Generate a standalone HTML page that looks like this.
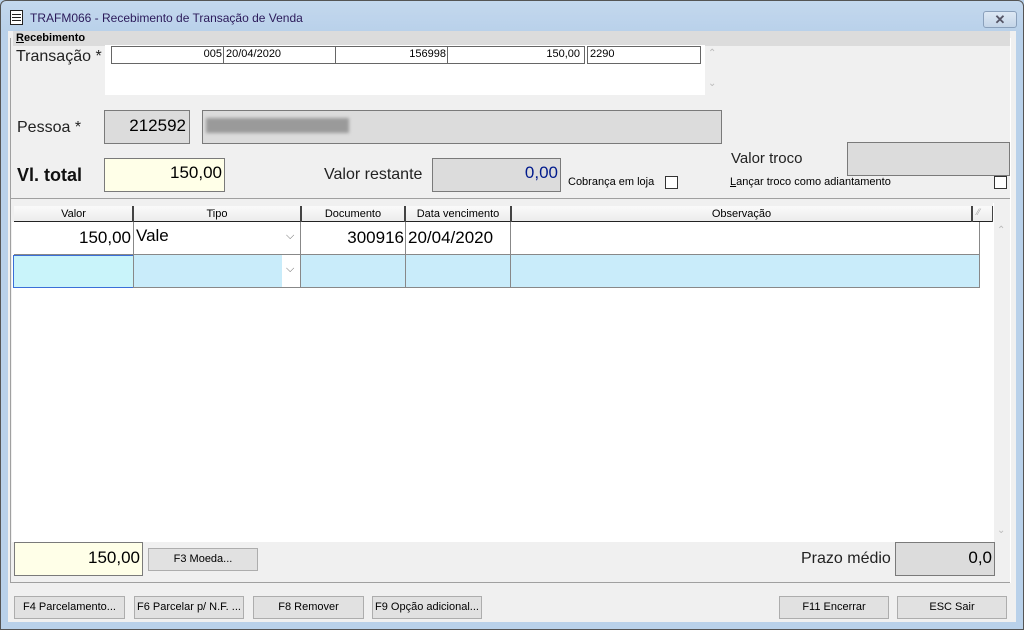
<!DOCTYPE html>
<html><head><meta charset="utf-8"><style>
*{box-sizing:border-box;margin:0;padding:0}
body{width:1024px;height:630px;overflow:hidden;background:#b9d1ea;font-family:"Liberation Sans",sans-serif;position:relative;font-size:11px;color:#000}
.a{position:absolute}
.box{position:absolute;border:1px solid #7a7a7a}
.btn{position:absolute;border:1px solid #adadad;background:#e1e1e1;font-size:11px;text-align:center;line-height:20px;height:23px}
.cb{position:absolute;width:13px;height:13px;border:1px solid #333;background:#fff}
.t{position:absolute;white-space:nowrap}
</style></head><body>
<div class="a" style="left:0;top:0;width:1024px;height:630px;border:1px solid #555;border-radius:6px 6px 0 0;background:linear-gradient(#c4d8ee,#b9d1ea 30px)"></div>
<div class="a" style="left:10px;top:10px;width:13px;height:15px;background:#fff;border:1px solid #222"></div>
<div class="a" style="left:12px;top:14px;width:9px;height:1px;background:#222;box-shadow:0 3px #222,0 6px #222"></div>
<div class="t" style="left:30px;top:11px;font-size:12px;color:#2b1a5a">TRAFM066 - Recebimento de Transação de Venda</div>
<div class="a" style="left:983px;top:11px;width:34px;height:17px;border:1px solid #8aa0bb;border-radius:3px;background:linear-gradient(#dde8f4,#c4d5e8);text-align:center;font-size:13px;font-weight:bold;line-height:15px;color:#556">✕</div>
<div class="a" style="left:8px;top:31px;width:1008px;height:591px;background:#f0f0f0"></div>
<div class="a" style="left:13px;top:31px;width:997px;height:15px;background:#dcdcdc"></div>
<div class="a" style="left:10px;top:38px;width:1px;height:545px;background:#a0a0a0"></div>
<div class="a" style="left:10px;top:582px;width:1000px;height:1px;background:#a0a0a0"></div>
<div class="a" style="left:1010px;top:38px;width:1px;height:545px;background:#fff"></div>
<div class="t" style="left:16px;top:32px;font-weight:bold;font-size:11px"><u>R</u>ecebimento</div>
<div class="t" style="left:16px;top:48px;font-size:16px;color:#222">Transação *</div>
<div class="a" style="left:105px;top:45px;width:600px;height:50px;background:#fff"></div>
<div class="box" style="left:111px;top:46px;width:474px;height:18px;border-color:#666"></div>
<div class="t" style="left:111px;top:48px;width:111px;text-align:right">005</div>
<div class="a" style="left:223px;top:46px;width:1px;height:18px;background:#666"></div>
<div class="t" style="left:226px;top:48px">20/04/2020</div>
<div class="a" style="left:335px;top:46px;width:1px;height:18px;background:#666"></div>
<div class="t" style="left:335px;top:48px;width:111px;text-align:right">156998</div>
<div class="a" style="left:447px;top:46px;width:1px;height:18px;background:#666"></div>
<div class="t" style="left:448px;top:48px;width:132px;text-align:right">150,00</div>
<div class="box" style="left:587px;top:46px;width:114px;height:18px;border-color:#666"></div>
<div class="t" style="left:590px;top:48px">2290</div>
<div class="t" style="left:708px;top:48px;color:#bbb;font-size:10px">⌃</div>
<div class="t" style="left:708px;top:78px;color:#bbb;font-size:10px">⌄</div>
<div class="t" style="left:17px;top:119px;font-size:16px;color:#222">Pessoa *</div>
<div class="box" style="left:104px;top:110px;width:86px;height:34px;background:#dcdcdc"></div>
<div class="t" style="left:104px;top:116px;width:82px;text-align:right;font-size:17px">212592</div>
<div class="box" style="left:202px;top:110px;width:520px;height:34px;background:#dcdcdc"></div>
<div class="a" style="left:206px;top:118px;width:143px;height:15px;background:#9a9a9a;filter:blur(1.5px)"></div>
<div class="t" style="left:17px;top:165px;font-size:18px;font-weight:bold;color:#111">Vl. total</div>
<div class="box" style="left:104px;top:158px;width:121px;height:34px;background:#ffffe8"></div>
<div class="t" style="left:104px;top:163px;width:118px;text-align:right;font-size:17px">150,00</div>
<div class="t" style="left:324px;top:166px;font-size:16px;color:#222">Valor restante</div>
<div class="box" style="left:432px;top:158px;width:129px;height:34px;background:#dcdcdc"></div>
<div class="t" style="left:432px;top:163px;width:126px;text-align:right;font-size:17px;color:#001a8c">0,00</div>
<div class="t" style="left:568px;top:176px;font-size:11px">Cobrança em loja</div>
<div class="cb" style="left:665px;top:176px"></div>
<div class="t" style="left:731px;top:150px;font-size:15px;color:#222">Valor troco</div>
<div class="box" style="left:847px;top:142px;width:163px;height:34px;background:#dcdcdc"></div>
<div class="t" style="left:730px;top:176px;font-size:11px"><u>L</u>ançar troco como adiantamento</div>
<div class="cb" style="left:994px;top:176px"></div>
<div class="a" style="left:10px;top:198px;width:1000px;height:1px;background:#a0a0a0"></div>
<div class="a" style="left:12px;top:203px;width:982px;height:339px;background:#fff"></div>
<div class="a" style="left:994px;top:222px;width:14px;height:320px;background:#f0f0f0"></div>
<div class="t" style="left:997px;top:225px;color:#bbb;font-size:10px">⌃</div>
<div class="t" style="left:997px;top:525px;color:#bbb;font-size:10px">⌄</div>
<div class="a" style="left:12px;top:203px;width:981px;height:19px;background:#f0f0f0"></div>
<div class="a" style="left:14px;top:206px;width:979px;height:16px;background:linear-gradient(#fafafa,#ececec);border-bottom:1px solid #222"></div>
<div class="t" style="left:14px;top:208px;width:119px;text-align:center">Valor</div>
<div class="t" style="left:133px;top:208px;width:168px;text-align:center">Tipo</div>
<div class="t" style="left:301px;top:208px;width:104px;text-align:center">Documento</div>
<div class="t" style="left:405px;top:208px;width:106px;text-align:center">Data vencimento</div>
<div class="t" style="left:511px;top:208px;width:461px;text-align:center">Observação</div>
<div class="a" style="left:132px;top:206px;width:2px;height:16px;background:#444"></div>
<div class="a" style="left:300px;top:206px;width:2px;height:16px;background:#444"></div>
<div class="a" style="left:404px;top:206px;width:2px;height:16px;background:#444"></div>
<div class="a" style="left:510px;top:206px;width:2px;height:16px;background:#444"></div>
<div class="a" style="left:971px;top:206px;width:2px;height:16px;background:#444"></div>
<div class="a" style="left:992px;top:206px;width:1px;height:16px;background:#444"></div>
<div class="t" style="left:977px;top:207px;color:#aaa;font-size:9px">⁄⁄</div>
<div class="a" style="left:14px;top:222px;width:966px;height:66px;border-bottom:1px solid #888"></div>
<div class="a" style="left:14px;top:254px;width:966px;height:1px;background:#888"></div>
<div class="a" style="left:14px;top:255px;width:966px;height:32px;background:#c9ecfa"></div>
<div class="a" style="left:13px;top:255px;width:121px;height:33px;background:#c9f4fa;border:1px solid #3a6fd8"></div>
<div class="a" style="left:282px;top:255px;width:18px;height:32px;background:#fff"></div>
<div class="a" style="left:133px;top:222px;width:1px;height:66px;background:#888"></div>
<div class="a" style="left:300px;top:222px;width:1px;height:66px;background:#888"></div>
<div class="a" style="left:405px;top:222px;width:1px;height:66px;background:#888"></div>
<div class="a" style="left:510px;top:222px;width:1px;height:66px;background:#888"></div>
<div class="a" style="left:979px;top:222px;width:1px;height:66px;background:#888"></div>
<div class="t" style="left:14px;top:228px;width:117px;text-align:right;font-size:17px">150,00</div>
<div class="t" style="left:136px;top:226px;font-size:17px">Vale</div>
<div class="t" style="left:286px;top:230px;color:#666;font-size:11px">⌵</div>
<div class="t" style="left:286px;top:263px;color:#666;font-size:11px">⌵</div>
<div class="t" style="left:301px;top:228px;width:103px;text-align:right;font-size:17px">300916</div>
<div class="t" style="left:408px;top:228px;font-size:17px">20/04/2020</div>
<div class="a" style="left:12px;top:542px;width:996px;height:40px;background:#f0f0f0"></div>
<div class="box" style="left:14px;top:542px;width:129px;height:34px;background:#ffffe8"></div>
<div class="t" style="left:14px;top:548px;width:126px;text-align:right;font-size:17px">150,00</div>
<div class="btn" style="left:148px;top:548px;width:110px">F3 Moeda...</div>
<div class="t" style="left:801px;top:550px;font-size:16px;color:#222">Prazo médio</div>
<div class="box" style="left:895px;top:542px;width:100px;height:34px;background:#dcdcdc"></div>
<div class="t" style="left:895px;top:548px;width:97px;text-align:right;font-size:17px">0,0</div>
<div class="btn" style="left:14px;top:596px;width:111px">F4 Parcelamento...</div>
<div class="btn" style="left:134px;top:596px;width:110px">F6 Parcelar p/ N.F. ...</div>
<div class="btn" style="left:253px;top:596px;width:111px">F8 Remover</div>
<div class="btn" style="left:372px;top:596px;width:110px">F9 Opção adicional...</div>
<div class="btn" style="left:779px;top:596px;width:110px">F11 Encerrar</div>
<div class="btn" style="left:897px;top:596px;width:110px">ESC Sair</div>
</body></html>
